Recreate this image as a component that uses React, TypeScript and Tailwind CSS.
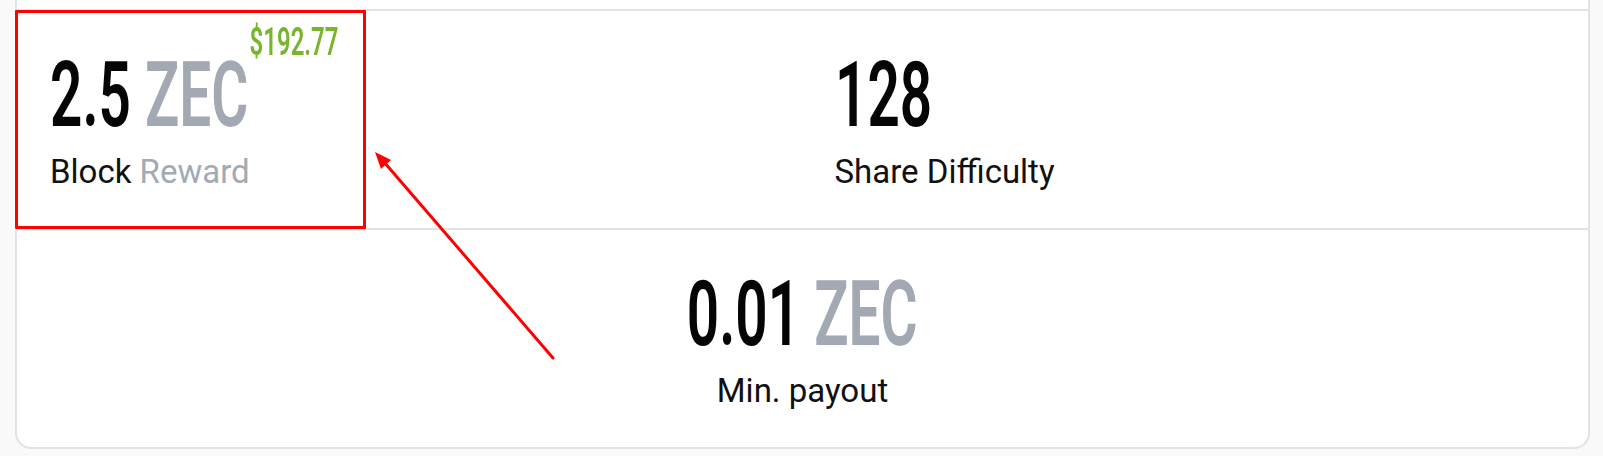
import React from "react";

const numCls =
  "font-['Roboto',sans-serif] font-semibold text-[90px] leading-[90px] inline-block relative scale-x-[0.63] whitespace-nowrap";
const labelCls = "font-['Roboto',sans-serif] text-[33px] leading-[40px] mt-[11px] text-[#111111]";

export default function App() {
  return (
    <div className="relative w-[1603px] h-[456px] bg-[#f9f9f9] overflow-hidden">
      <div className="ml-[15px] w-[1575px] h-[449px] bg-white border-x-2 border-b-2 border-[#dfe2e6] rounded-b-2xl pt-[9px]">
        <div className="grid grid-cols-2 h-[219px] border-t-2 border-[#e1e3e6]">
          <div className="pl-[33px] pt-[40px] flex flex-col items-start">
            <span className={numCls + " origin-left text-[#050505]"}>
              2.5 <span className="text-[#a2a9b2]">ZEC</span>
              <span className="absolute left-full top-[-28px] ml-[2px] text-[38px] leading-[38px] text-[#78b52d]">
                $192.77
              </span>
            </span>
            <div className={labelCls}>
              Block <span className="text-[#a2aab4]">Reward</span>
            </div>
          </div>
          <div className="pl-[32px] pt-[40px] flex flex-col items-start">
            <span className={numCls + " origin-left text-[#050505]"}>128</span>
            <div className={labelCls}>Share Difficulty</div>
          </div>
        </div>
        <div className="h-[219px] border-t-2 border-[#e1e3e6] pt-[40px] flex flex-col items-center">
          <span className={numCls + " origin-center text-[#050505]"}>
            0.01 <span className="text-[#a2a9b2]">ZEC</span>
          </span>
          <div className={labelCls}>Min. payout</div>
        </div>
      </div>

      <div className="absolute left-[15px] top-[10px] w-[351px] h-[219px] border-[3px] border-[#ff0000] rounded-[1px] pointer-events-none" />
      <svg
        className="absolute left-0 top-0 pointer-events-none"
        width="1603"
        height="456"
        viewBox="0 0 1603 456"
      >
        <line x1="553" y1="358" x2="384" y2="162" stroke="#ff0000" strokeWidth="3" strokeLinecap="round" />
        <polygon points="375,152 391,160 381,169" fill="#ff0000" />
      </svg>
    </div>
  );
}
